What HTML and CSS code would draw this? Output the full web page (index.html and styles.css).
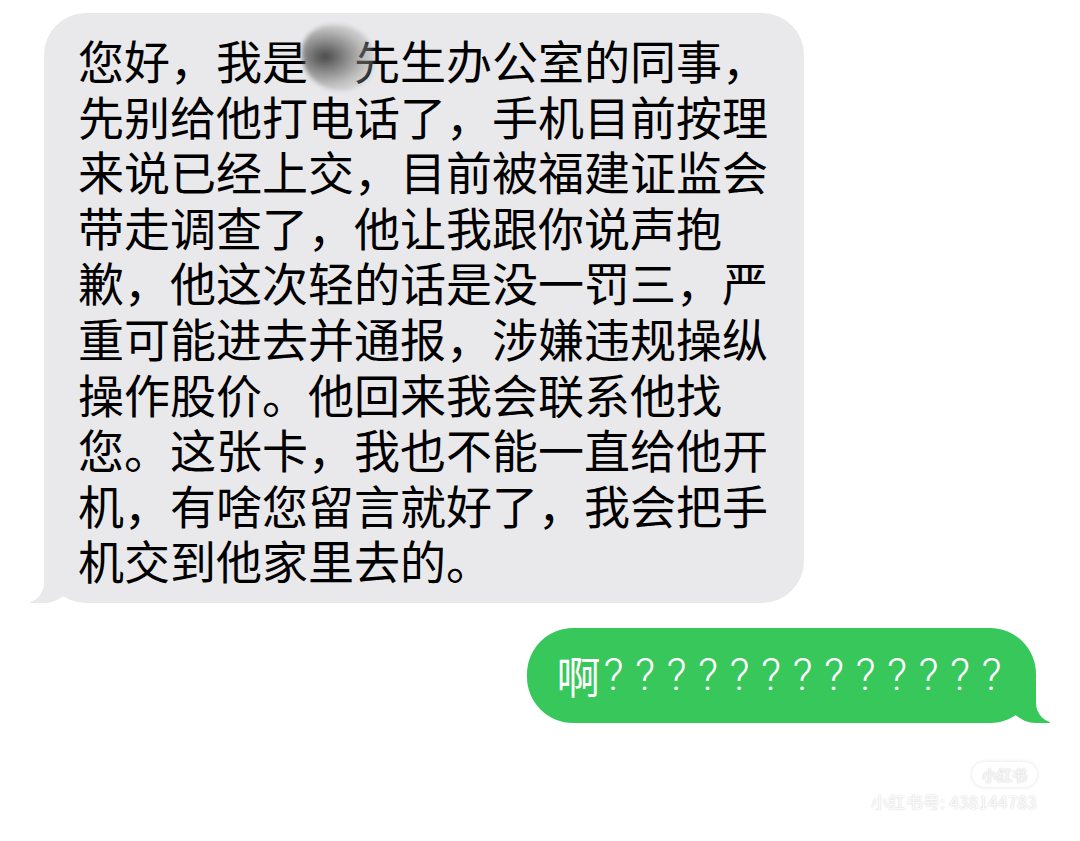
FILE: index.html
```html
<!DOCTYPE html>
<html lang="zh-CN">
<head>
    <meta charset="UTF-8">
    <meta name="viewport" content="width=device-width, initial-scale=1.0">
    <title>短信</title>
    <link rel="stylesheet" href="styles.css">
</head>
<body>
    <div class="chat">
        <div class="bubble them">
            您好，我是<span class="blur"></span>先生办公室的同事，<br>
            先别给他打电话了，手机目前按理<br>
            来说已经上交，目前被福建证监会<br>
            带走调查了，他让我跟你说声抱<br>
            歉，他这次轻的话是没一罚三，严<br>
            重可能进去并通报，涉嫌违规操纵<br>
            操作股价。他回来我会联系他找<br>
            您。这张卡，我也不能一直给他开<br>
            机，有啥您留言就好了，我会把手<br>
            机交到他家里去的。
        </div>

        <div class="bubble me">啊<span class="marks">?????????????</span></div>

        <div class="watermark">
            <div class="wm-logo">小红书</div>
            <div class="wm-id">小红书号: 438144783</div>
        </div>
    </div>
</body>
</html>
```

FILE: styles.css
```css
body {
    margin: 0;
    background-color: #ffffff;
    font-family: "Noto Sans CJK SC", "Noto Sans", sans-serif;
}
.chat {
    display: flex;
    flex-direction: column;
    padding: 13px 44px 0 44px;
}
.bubble {
    position: relative;
    box-sizing: border-box;
}
.them {
    align-self: flex-start;
    background-color: #e9e9eb;
    color: #000;
    font-size: 46px;
    line-height: 55.6px;
    padding: 19px 36px 15px 34px;
    border-radius: 42px;
    white-space: nowrap;
}
.them::before {
    content: "";
    position: absolute;
    bottom: 0;
    left: -14px;
    width: 44px;
    height: 42px;
    background-color: #e9e9eb;
    border-bottom-right-radius: 30px;
}
.them::after {
    content: "";
    position: absolute;
    bottom: 0;
    left: -22px;
    width: 22px;
    height: 42px;
    background-color: #ffffff;
    border-bottom-right-radius: 20px;
}
/* 打码的名字 */
.blur {
    display: inline-block;
    position: relative;
    width: 1em;
    height: 1em;
    vertical-align: top;
}
.blur::before {
    content: "";
    position: absolute;
    left: -6px;
    top: -7px;
    width: 72px;
    height: 66px;
    border-radius: 40% 50% 45% 55%;
    background: radial-gradient(ellipse at 32% 48%, rgba(45,45,45,0.85) 0%, rgba(90,90,90,0.7) 28%, rgba(150,150,150,0.5) 58%, rgba(210,210,210,0.2) 88%, rgba(233,233,235,0) 100%);
    filter: blur(2px);
}
.me {
    align-self: flex-end;
    margin-top: 25px;
    height: 95px;
    display: flex;
    align-items: center;
    background-color: #37c75a;
    color: #ffffff;
    font-size: 44px;
    padding: 0 23px 0 29px;
    border-radius: 46px;
}
.me::before {
    content: "";
    position: absolute;
    bottom: 0;
    right: -14px;
    width: 44px;
    height: 42px;
    background-color: #37c75a;
    border-bottom-left-radius: 30px;
}
.me::after {
    content: "";
    position: absolute;
    bottom: 0;
    right: -22px;
    width: 22px;
    height: 42px;
    background-color: #ffffff;
    border-bottom-left-radius: 20px;
}
.marks {
    font-family: Roboto, "Liberation Sans", sans-serif;
    font-weight: 300;
    letter-spacing: 11.5px;
    margin-left: 3px;
}
.watermark {
    align-self: flex-end;
    margin-top: 39px;
    margin-right: -1px;
    display: flex;
    flex-direction: column;
    align-items: flex-end;
    gap: 6px;
}
.wm-logo {
    font-size: 15px;
    font-weight: bold;
    color: #f4f4f4;
    background-color: #ffffff;
    padding: 2px 10px;
    border-radius: 14px;
    box-shadow: 0 0 4px rgba(0,0,0,0.12);
    text-shadow: 0 0 2px rgba(0,0,0,0.2);
}
.wm-id {
    font-size: 17px;
    line-height: 18px;
    color: #fbfbfb;
    text-shadow: 0 0 2px rgba(0,0,0,0.22);
    letter-spacing: 0.3px;
}
```
